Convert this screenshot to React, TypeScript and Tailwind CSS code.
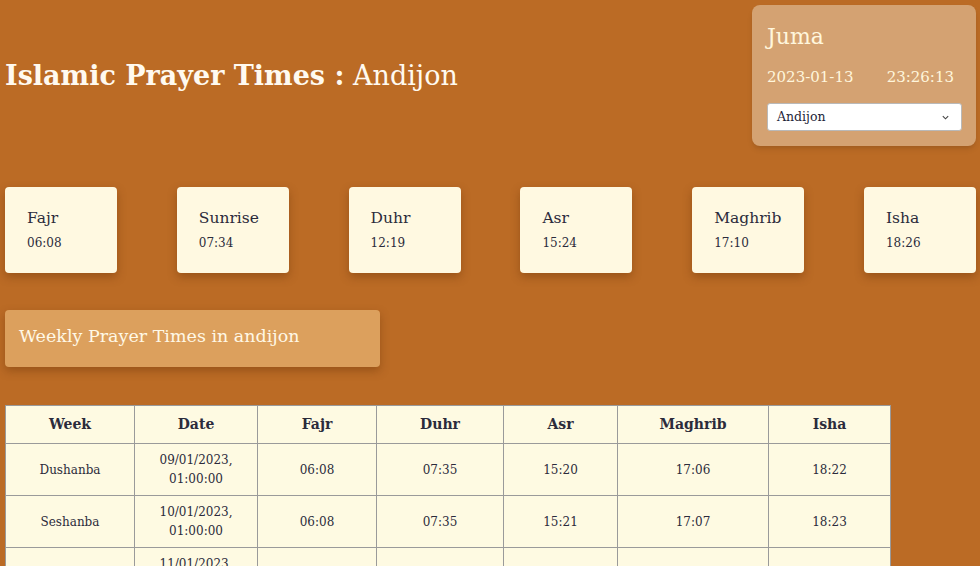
import React from "react";

const prayers = [
  { name: "Fajr", time: "06:08" },
  { name: "Sunrise", time: "07:34" },
  { name: "Duhr", time: "12:19" },
  { name: "Asr", time: "15:24" },
  { name: "Maghrib", time: "17:10" },
  { name: "Isha", time: "18:26" },
];

const rows = [
  ["Dushanba", "09/01/2023,", "01:00:00", "06:08", "07:35", "15:20", "17:06", "18:22"],
  ["Seshanba", "10/01/2023,", "01:00:00", "06:08", "07:35", "15:21", "17:07", "18:23"],
  ["Chorshanba", "11/01/2023,", "01:00:00", "06:08", "07:35", "15:22", "17:08", "18:24"],
];

const widths = ["w-[129px]", "w-[123px]", "w-[119px]", "w-[127px]", "w-[114px]", "w-[151px]", "w-[122px]"];
const heads = ["Week", "Date", "Fajr", "Duhr", "Asr", "Maghrib", "Isha"];

export default function App() {
  return (
    <div
      className="h-[566px] w-full overflow-hidden bg-[#bb6b25] p-[5px] text-[#2b2b3b]"
      style={{ fontFamily: '"DejaVu Serif", serif' }}
    >
      <div className="flex w-[971px] items-center justify-between">
        <h1 className="text-[27px] leading-[40px] text-[#fffaf0]">
          <span className="font-bold">Islamic Prayer Times :</span> Andijon
        </h1>
        <div className="h-[141px] w-[224px] rounded-lg bg-[#d4a272] px-[15px] pt-[18px] text-[#fff6dc] shadow-md">
          <div className="text-[22px] leading-[28px]">Juma</div>
          <div className="mt-[15px] flex justify-between pr-[7px] text-[15px] leading-[22px]">
            <span>2023-01-13</span>
            <span>23:26:13</span>
          </div>
          <div className="mt-[15px] flex h-[28px] w-[195px] items-center justify-between rounded-[3px] border border-[#b9b9b9] bg-white pl-[9px] pr-[11px] text-[12.5px] text-[#1f1f3a]">
            <span>Andijon</span>
            <svg width="9" height="9" viewBox="0 0 10 10" fill="none">
              <path d="M2 3.5 L5 6.5 L8 3.5" stroke="#444" strokeWidth="1.2" />
            </svg>
          </div>
        </div>
      </div>

      <div className="mt-[41px] flex w-[971px] justify-between">
        {prayers.map((p) => (
          <div
            key={p.name}
            className="h-[86px] w-[112px] rounded-[4px] bg-[#fff9e1] pl-[22px] pt-[20px] shadow-[0_4px_10px_rgba(90,40,0,0.35)]"
          >
            <div className="text-[15.5px] leading-[22px]">{p.name}</div>
            <div className="mt-[5px] text-[12px] leading-[18px]">{p.time}</div>
          </div>
        ))}
      </div>

      <div className="mt-[37px] flex h-[57px] w-[375px] items-center rounded-[4px] bg-[#dca05d] pb-[5px] pl-[14px] text-[17.5px] text-[#fff8e6] shadow-[0_4px_10px_rgba(90,40,0,0.35)]">
        Weekly Prayer Times in andijon
      </div>

      <table className="mt-[38px] border-collapse bg-[#fefae2] text-center">
        <thead>
          <tr>
            {heads.map((h, i) => (
              <th
                key={h}
                className={`${widths[i]} h-[38px] border border-[#9a9a9a] text-[14px] font-bold`}
              >
                {h}
              </th>
            ))}
          </tr>
        </thead>
        <tbody>
          {rows.map((r) => (
            <tr key={r[0]}>
              <td className="h-[52px] border border-[#9a9a9a] text-[12px]">{r[0]}</td>
              <td className="h-[52px] border border-[#9a9a9a] text-[12px] leading-[19px]">
                {r[1]}
                <br />
                {r[2]}
              </td>
              {r.slice(3).map((c, i) => (
                <td key={i} className="h-[52px] border border-[#9a9a9a] text-[12px]">
                  {c}
                </td>
              ))}
            </tr>
          ))}
        </tbody>
      </table>
    </div>
  );
}
